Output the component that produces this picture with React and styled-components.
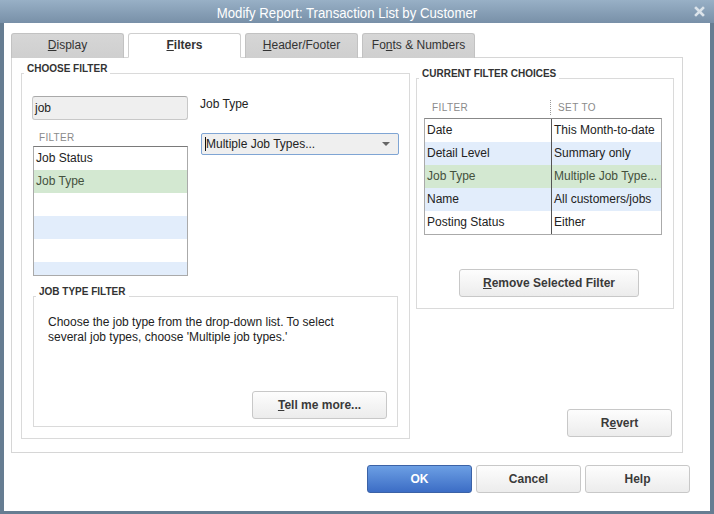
import React from "react";
import styled, { createGlobalStyle } from "styled-components";

const GlobalStyle = createGlobalStyle`
  * { box-sizing: border-box; }
  html, body { margin: 0; padding: 0; background: #fff; }
  body {
    font-family: "Liberation Sans", Arial, sans-serif;
    font-size: 12px;
    color: #222;
  }
`;

const filterRows = [
  { label: "Job Status" },
  { label: "Job Type", selected: true },
  { label: "" },
  { label: "" },
  { label: "" },
  { label: "" },
];

const choices = [
  { filter: "Date", value: "This Month-to-date" },
  { filter: "Detail Level", value: "Summary only" },
  { filter: "Job Type", value: "Multiple Job Type...", selected: true },
  { filter: "Name", value: "All customers/jobs" },
  { filter: "Posting Status", value: "Either" },
];

const App = () => {
  return (
    <>
      <GlobalStyle />
      <Window>
        <TitleBar>
          <Title>
            <TitleText>Modify Report: Transaction List by Customer</TitleText>
          </Title>
          <Close>
            <svg width="11" height="11" viewBox="0 0 11 11">
              <path
                d="M2 2 L9 9 M9 2 L2 9"
                stroke="#dbe3ea"
                strokeWidth="2.6"
                strokeLinecap="square"
              />
            </svg>
          </Close>
        </TitleBar>
        <Body>
          <TabRow>
            <Tab>
              <u>D</u>isplay
            </Tab>
            <Tab $active>
              <u>F</u>ilters
            </Tab>
            <Tab>
              <u>H</u>eader/Footer
            </Tab>
            <Tab>
              Fo<u>n</u>ts &amp; Numbers
            </Tab>
          </TabRow>
          <Panel>
            <Group>
              <Legend $shift={-8}>CHOOSE FILTER</Legend>
              <ChooseGrid>
                <div>
                  <SearchBox>job</SearchBox>
                  <ColumnHead>FILTER</ColumnHead>
                  <FilterList>
                    {filterRows.map((row, i) => (
                      <ListRow key={i} $odd={i % 2 === 1} $selected={row.selected}>
                        {row.label}
                      </ListRow>
                    ))}
                  </FilterList>
                </div>
                <div>
                  <FieldLabel>Job Type</FieldLabel>
                  <Select>
                    <Caret />
                    <SelectText>Multiple Job Types...</SelectText>
                    <Arrow />
                  </Select>
                </div>
              </ChooseGrid>
              <InnerGroup>
                <Legend $shift={-12}>JOB TYPE FILTER</Legend>
                <HelpText>
                  Choose the job type from the drop-down list. To select
                  <br />
                  several job types, choose 'Multiple job types.'
                </HelpText>
                <Button $w={135} $push>
                  <u>T</u>ell me more...
                </Button>
              </InnerGroup>
            </Group>
            <RightColumn>
              <ChoicesGroup>
                <Legend $shift={-5}>CURRENT FILTER CHOICES</Legend>
                <TableHead>
                  <HeadCell>FILTER</HeadCell>
                  <HeadCell $divider>SET TO</HeadCell>
                </TableHead>
                <ChoiceTable>
                  {choices.map((c, i) => (
                    <ChoiceRow key={c.filter} $odd={i % 2 === 1} $selected={c.selected}>
                      <Cell>{c.filter}</Cell>
                      <Cell $divider>{c.value}</Cell>
                    </ChoiceRow>
                  ))}
                </ChoiceTable>
                <RemoveButton $w={180}>
                  <u>R</u>emove Selected Filter
                </RemoveButton>
              </ChoicesGroup>
              <RevertButton $w={105}>
                R<u>e</u>vert
              </RevertButton>
            </RightColumn>
          </Panel>
          <ButtonRow>
            <Button $w={105} $primary>
              OK
            </Button>
            <Button $w={105}>Cancel</Button>
            <Button $w={105}>Help</Button>
          </ButtonRow>
        </Body>
      </Window>
    </>
  );
};

export default App;

const Window = styled.div`
  width: 714px;
  height: 514px;
  display: flex;
  flex-direction: column;
  background: #667d92;
`;

const TitleBar = styled.div`
  height: 23px;
  flex: none;
  display: flex;
  align-items: center;
  background: linear-gradient(#98b0c6, #7890a8);
`;

const Title = styled.div`
  flex: 1;
  text-align: center;
  padding-top: 1px;
`;

const TitleText = styled.span`
  display: inline-block;
  color: #fff;
  font-family: "Liberation Sans", Arial, sans-serif;
  font-size: 15px;
  transform: scaleX(0.88);
`;

const Close = styled.div`
  width: 20px;
  display: flex;
  align-items: center;
`;

const Body = styled.div`
  flex: 1;
  background: #fff;
  margin: 0 4px 3px 4px;
  padding: 10px 20px 0 7px;
  display: flex;
  flex-direction: column;
`;

const TabRow = styled.div`
  display: flex;
  gap: 4px;
  height: 25px;
  margin-bottom: -1px;
  position: relative;
  z-index: 1;
`;

const Tab = styled.div`
  width: 113px;
  height: 25px;
  border: 1px solid ${(p) => (p.$active ? "#cfcfcf" : "#c2c2c2")};
  border-bottom: ${(p) => (p.$active ? "1px solid #fff" : "none")};
  border-radius: 3px 3px 0 0;
  background: ${(p) => (p.$active ? "#fff" : "linear-gradient(#d6d6d6, #cfcfcf)")};
  font-weight: ${(p) => (p.$active ? "bold" : "normal")};
  color: #333;
  font-size: 12px;
  display: flex;
  align-items: center;
  justify-content: center;
  padding-bottom: 2px;
`;

const Panel = styled.div`
  width: 672px;
  height: 396px;
  border: 1px solid #d6d6d6;
  padding: 6px 8px 13px 9px;
  display: grid;
  grid-template-columns: 389px 258px;
  column-gap: 6px;
`;

const Group = styled.fieldset`
  margin: 0;
  min-width: 0;
  border: 1px solid #dadada;
  padding: 14px 10px 11px 10px;
`;

const Legend = styled.legend`
  font-size: 10px;
  font-weight: bold;
  line-height: 10px;
  color: #333;
  padding: 0 3px 8px 3px;
  margin-left: ${(p) => p.$shift}px;
`;

const ChooseGrid = styled.div`
  display: grid;
  grid-template-columns: 156px 198px;
  column-gap: 12px;
`;

const SearchBox = styled.div`
  height: 24px;
  border: 1px solid #c8c8c8;
  border-top-color: #a9a9a9;
  border-radius: 3px;
  background: #efefef;
  padding-left: 2px;
  display: flex;
  align-items: center;
`;

const ColumnHead = styled.div`
  height: 26px;
  display: flex;
  align-items: flex-end;
  padding: 0 0 3px 7px;
  font-size: 10px;
  line-height: 10px;
  color: #8a8a8a;
  letter-spacing: 0.3px;
`;

const FilterList = styled.div`
  margin-left: 1px;
  width: 155px;
  height: 130px;
  border: 1px solid #aaa;
  border-top-color: #7a7a7a;
  overflow: hidden;
`;

const ListRow = styled.div`
  height: 23px;
  flex: none;
  line-height: 23px;
  padding-left: 2px;
  background: ${(p) => (p.$selected ? "#d3e8d1" : p.$odd ? "#e2edfb" : "#fff")};
  color: ${(p) => (p.$selected ? "#44513d" : "#222")};
`;

const FieldLabel = styled.div`
  height: 14px;
  line-height: 14px;
  margin-top: 1px;
`;

const Select = styled.div`
  margin-top: 22px;
  margin-left: 1px;
  height: 22px;
  width: 198px;
  border: 1px solid #7fa5d4;
  border-radius: 2px;
  background: #efefef;
  display: flex;
  align-items: center;
  padding: 0 8px 0 3px;
`;

const Caret = styled.span`
  width: 1px;
  height: 14px;
  background: #111;
`;

const SelectText = styled.span`
  flex: 1;
`;

const Arrow = styled.span`
  width: 0;
  height: 0;
  border-left: 4px solid transparent;
  border-right: 4px solid transparent;
  border-top: 4px solid #666;
`;

const InnerGroup = styled.fieldset`
  margin: 11px 0 0 1px;
  min-width: 0;
  width: 365px;
  height: 140px;
  border: 1px solid #dadada;
  padding: 10px 10px 7px 14px;
  display: flex;
  flex-direction: column;
`;

const HelpText = styled.div`
  line-height: 15px;
`;

const RightColumn = styled.div`
  display: flex;
  flex-direction: column;
`;

const ChoicesGroup = styled.fieldset`
  margin: 5px 0 0 0;
  min-width: 0;
  height: 240px;
  border: 1px solid #dadada;
  padding: 0 10px 0 7px;
`;

const TableHead = styled.div`
  height: 31px;
  display: grid;
  grid-template-columns: 126px 1fr;
  align-items: end;
  padding-bottom: 3px;
`;

const HeadCell = styled.div`
  font-size: 10px;
  line-height: 10px;
  color: #8a8a8a;
  letter-spacing: 0.4px;
  padding-left: ${(p) => (p.$divider ? "7px" : "8px")};
  height: ${(p) => (p.$divider ? "15px" : "12px")};
  border-left: ${(p) => (p.$divider ? "1px dotted #9a9a9a" : "none")};
  display: flex;
  align-items: flex-end;
  padding-bottom: 2px;
`;

const ChoiceTable = styled.div`
  width: 238px;
  border: 1px solid #aaa;
  border-top-color: #888;
`;

const ChoiceRow = styled.div`
  display: grid;
  grid-template-columns: 126px 1fr;
  height: 23px;
  line-height: 23px;
  background: ${(p) => (p.$selected ? "#d3e8d1" : p.$odd ? "#e2edfb" : "#fff")};
  color: ${(p) => (p.$selected ? "#44513d" : "#222")};
`;

const Cell = styled.div`
  padding-left: 2px;
  white-space: nowrap;
  overflow: hidden;
  border-left: ${(p) => (p.$divider ? "1px solid #555" : "none")};
`;

const Button = styled.button`
  width: ${(p) => p.$w}px;
  height: 28px;
  padding: 0;
  border: 1px solid ${(p) => (p.$primary ? "#3b62a6" : "#c8c8c8")};
  border-radius: 3px;
  background: ${(p) =>
    p.$primary
      ? "linear-gradient(#6c9fe4, #3c6dc5)"
      : "linear-gradient(#fdfdfd, #ececec)"};
  color: ${(p) => (p.$primary ? "#fff" : "#3a3a3a")};
  font: bold 12px "Liberation Sans", Arial, sans-serif;
  flex: none;
  align-self: ${(p) => (p.$push ? "flex-end" : "auto")};
  margin-top: ${(p) => (p.$push ? "auto" : "0")};
`;

const RemoveButton = styled(Button)`
  display: block;
  margin: 34px 0 0 35px;
`;

const RevertButton = styled(Button)`
  align-self: flex-end;
  margin: auto 2px 2px 0;
`;

const ButtonRow = styled.div`
  display: flex;
  justify-content: flex-end;
  gap: 4px;
  margin-top: 12px;
`;
